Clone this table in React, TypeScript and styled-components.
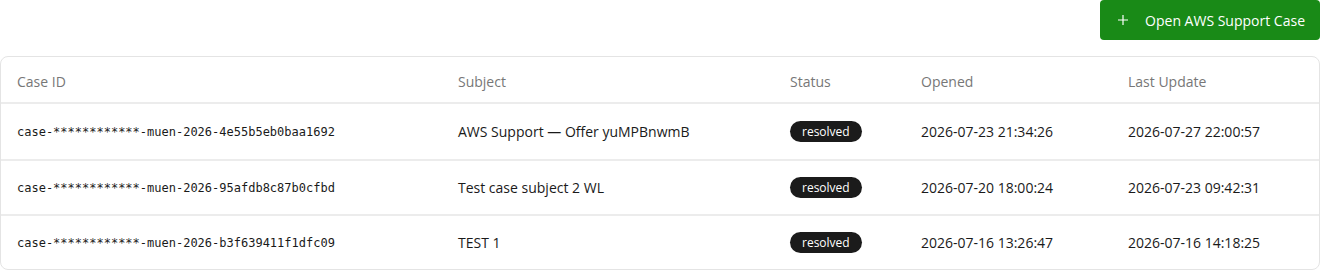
import styled, { createGlobalStyle } from "styled-components";

const GlobalStyle = createGlobalStyle`
  html, body {
    margin: 0;
    padding: 0;
    background: #ffffff;
  }
  body {
    font-family: "Open Sans", "Noto Sans", sans-serif;
    color: #1a1a1a;
  }
`;

type Case = {
  id: string;
  subject: string;
  status: string;
  opened: string;
  updated: string;
};

const cases: Case[] = [
  {
    id: "case-************-muen-2026-4e55b5eb0baa1692",
    subject: "AWS Support \u2014 Offer yuMPBnwmB",
    status: "resolved",
    opened: "2026-07-23 21:34:26",
    updated: "2026-07-27 22:00:57",
  },
  {
    id: "case-************-muen-2026-95afdb8c87b0cfbd",
    subject: "Test case subject 2 WL",
    status: "resolved",
    opened: "2026-07-20 18:00:24",
    updated: "2026-07-23 09:42:31",
  },
  {
    id: "case-************-muen-2026-b3f639411f1dfc09",
    subject: "TEST 1",
    status: "resolved",
    opened: "2026-07-16 13:26:47",
    updated: "2026-07-16 14:18:25",
  },
];

const COLUMNS = "441px 332px 131px 207px 1fr";

const Page = styled.div`
  display: flex;
  flex-direction: column;
  width: 1320px;
`;

const Toolbar = styled.div`
  display: flex;
  justify-content: flex-end;
  margin-bottom: 16px;
`;

const PrimaryButton = styled.button`
  display: flex;
  align-items: center;
  gap: 17px;
  height: 40px;
  padding: 0 15px 0 18px;
  border: none;
  border-radius: 4px;
  background: #198a17;
  color: #ffffff;
  font-family: "Open Sans", sans-serif;
  font-size: 14px;
  cursor: pointer;
`;

const Card = styled.div`
  border: 1px solid #e4e4e4;
  border-radius: 8px;
  overflow: hidden;
`;

const HeaderRow = styled.div`
  display: grid;
  grid-template-columns: ${COLUMNS};
  align-items: center;
  box-sizing: border-box;
  height: 47px;
  padding-top: 3px;
  border-bottom: 2px solid #ececec;
`;

const HeadCell = styled.div`
  padding-left: 16px;
  font-size: 14px;
  color: #777777;
`;

const Row = styled.div`
  display: grid;
  grid-template-columns: ${COLUMNS};
  align-items: center;
  box-sizing: border-box;
  height: 55px;

  & + & {
    height: 55px;
    border-top: 2px solid #ececec;
  }
`;

const Cell = styled.div<{ mono?: boolean }>`
  padding-left: 16px;
  white-space: nowrap;
  color: #1a1a1a;
  font-family: ${({ mono }) =>
    mono ? `"DejaVu Sans Mono", "Liberation Mono", monospace` : "inherit"};
  font-size: ${({ mono }) => (mono ? "12px" : "14px")};
`;

const StatusPill = styled.span`
  display: inline-block;
  padding: 0 12px;
  border-radius: 11px;
  background: #1b1b1b;
  color: #ffffff;
  font-size: 12px;
  line-height: 21px;
`;

const headers = ["Case ID", "Subject", "Status", "Opened", "Last Update"];

const PlusIcon = () => (
  <svg width="10" height="10" viewBox="0 0 10 10" fill="none">
    <path d="M5 0v10M0 5h10" stroke="#ffffff" strokeWidth="1.2" />
  </svg>
);

export default function App() {
  return (
    <Page>
      <GlobalStyle />
      <Toolbar>
        <PrimaryButton>
          <PlusIcon />
          Open AWS Support Case
        </PrimaryButton>
      </Toolbar>
      <Card>
        <HeaderRow>
          {headers.map((h) => (
            <HeadCell key={h}>{h}</HeadCell>
          ))}
        </HeaderRow>
        {cases.map((c) => (
          <Row key={c.id}>
            <Cell mono>{c.id}</Cell>
            <Cell>{c.subject}</Cell>
            <Cell>
              <StatusPill>{c.status}</StatusPill>
            </Cell>
            <Cell>{c.opened}</Cell>
            <Cell>{c.updated}</Cell>
          </Row>
        ))}
      </Card>
    </Page>
  );
}
